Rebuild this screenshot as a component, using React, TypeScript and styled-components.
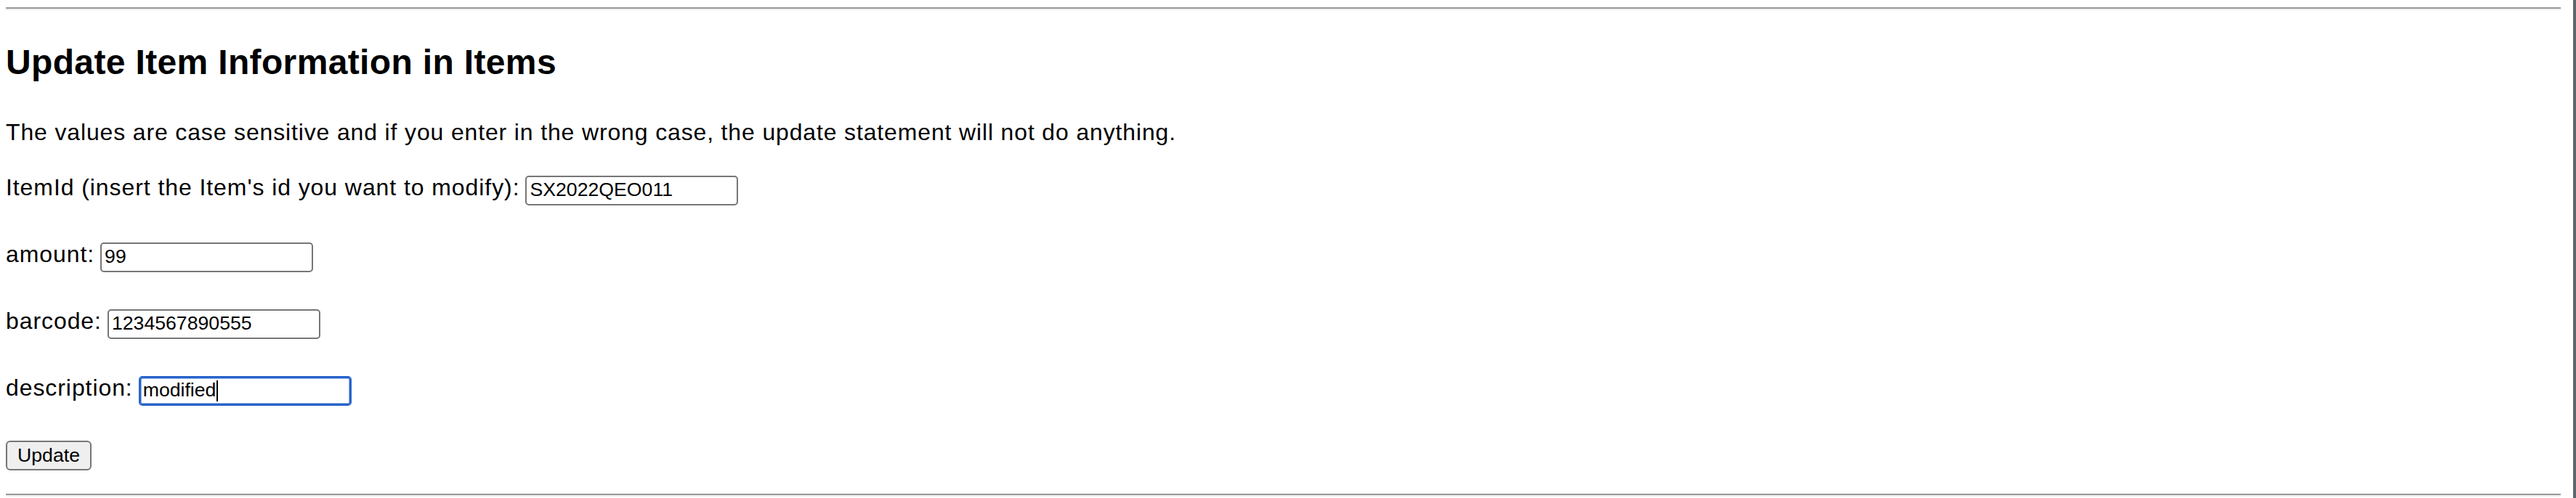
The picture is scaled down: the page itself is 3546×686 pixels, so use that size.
import React from "react";
import styled, { createGlobalStyle } from "styled-components";

const GlobalStyle = createGlobalStyle`
  html, body {
    margin: 0;
    padding: 0;
    background: #ffffff;
  }
  body {
    font-family: "Liberation Sans", Arial, Helvetica, sans-serif;
    color: #000000;
  }
`;

const Page = styled.div`
  box-sizing: border-box;
  width: 100vw;
  min-height: 100vh;
  padding: 10px 17px 0 8px;
  border-right: 4px solid #5d656e;
  display: flex;
  flex-direction: column;
`;

const Rule = styled.hr`
  margin: 0;
  height: 0;
  border: none;
  border-top: 2px solid #9a9a9a;
  border-bottom: 2px solid #eeeeee;
`;

const Title = styled.h2`
  margin: 44px 0 0;
  font-size: 48px;
  line-height: 55px;
  font-weight: 700;
  letter-spacing: 0.35px;
`;

const Note = styled.p`
  margin: 51px 0 0;
  font-size: 32px;
  line-height: 37px;
  letter-spacing: 0.85px;
`;

const Form = styled.form`
  display: flex;
  flex-direction: column;
  align-items: flex-start;
  margin-top: 41px;
`;

const Row = styled.div`
  display: flex;
  align-items: flex-start;
  gap: 8px;
  margin-bottom: 51px;
`;

const Label = styled.label`
  font-size: 32px;
  line-height: 32px;
  letter-spacing: 0.92px;
  white-space: nowrap;
`;

const FieldWrap = styled.span`
  position: relative;
  display: inline-flex;
`;

const Field = styled.input<{ $focused?: boolean }>`
  box-sizing: border-box;
  width: 293px;
  height: 41px;
  margin: 0;
  padding: 0 4px 3px;
  font-family: "Liberation Sans", Arial, Helvetica, sans-serif;
  font-size: 26.67px;
  line-height: 30px;
  color: #000000;
  background: #ffffff;
  border: 2px solid ${(p) => (p.$focused ? "#2864cc" : "#767676")};
  border-radius: 5px;
  box-shadow: ${(p) => (p.$focused ? "inset 0 0 0 1.5px #2864cc" : "none")};
  outline: none;
`;

const Caret = styled.span<{ $left: number }>`
  position: absolute;
  top: 6px;
  left: ${(p) => p.$left}px;
  width: 2px;
  height: 29px;
  background: #000000;
`;

const SubmitButton = styled.button`
  box-sizing: border-box;
  height: 41px;
  margin: -3px 0 0;
  padding: 0 14px;
  font-family: "Liberation Sans", Arial, Helvetica, sans-serif;
  font-size: 26.67px;
  color: #000000;
  background: #efefef;
  border: 2px solid #767676;
  border-radius: 6px;
`;

const BottomRule = styled(Rule)`
  margin-top: 32px;
`;

const fields = [
  { id: "itemId", label: "ItemId (insert the Item's id you want to modify):", value: "SX2022QEO011" },
  { id: "amount", label: "amount:", value: "99" },
  { id: "barcode", label: "barcode:", value: "1234567890555" },
  { id: "description", label: "description:", value: "modified", focused: true },
];

export default function App() {
  return (
    <>
      <GlobalStyle />
      <Page>
        <Rule />
        <Title>Update Item Information in Items</Title>
        <Note>
          The values are case sensitive and if you enter in the wrong case, the update statement will not do anything.
        </Note>
        <Form onSubmit={(e) => e.preventDefault()}>
          {fields.map((f) => (
            <Row key={f.id}>
              <Label htmlFor={f.id}>{f.label}</Label>
              <FieldWrap>
                <Field id={f.id} name={f.id} type="text" defaultValue={f.value} $focused={f.focused} />
                {f.focused && <Caret $left={107} />}
              </FieldWrap>
            </Row>
          ))}
          <SubmitButton type="submit">Update</SubmitButton>
        </Form>
        <BottomRule />
      </Page>
    </>
  );
}
